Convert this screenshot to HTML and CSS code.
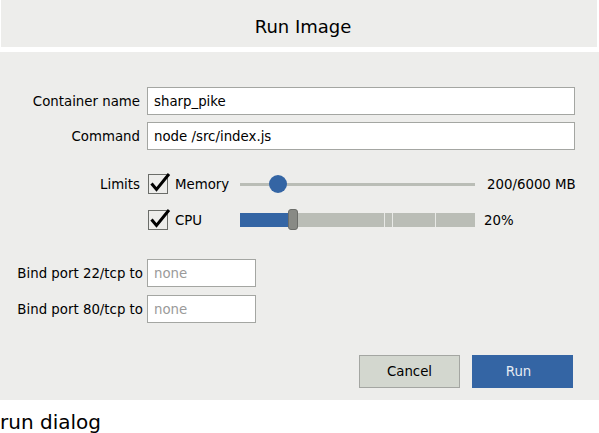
FILE: index.html
```html
<!DOCTYPE html>
<html>
<head>
<meta charset="utf-8">
<link rel="stylesheet" href="styles.css">
</head>
<body>
<div class="dialog">
  <div class="header"><span class="title">Run Image</span></div>
  <div class="content">
    <div class="row row-first">
      <label class="label">Container name</label>
      <div class="input wide">sharp_pike</div>
    </div>
    <div class="row row-second">
      <label class="label">Command</label>
      <div class="input wide">node /src/index.js</div>
    </div>
    <div class="row row-limit row-mem">
      <span class="label">Limits</span>
      <svg class="check" width="24" height="22" viewBox="0 0 24 22"><rect x="1.5" y="1.5" width="19" height="19" fill="none" stroke="#6b6d69" stroke-width="1"/><path d="M4.5 10.5 L9.5 16.5 L22 1" fill="none" stroke="#000" stroke-width="3" stroke-linejoin="miter"/></svg>
      <span class="limit-name">Memory</span>
      <div class="scale">
        <div class="scale-track"></div>
        <div class="scale-knob"></div>
      </div>
      <span class="limit-value">200/6000 MB</span>
    </div>
    <div class="row row-limit row-cpu">
      <span class="label"></span>
      <svg class="check" width="24" height="22" viewBox="0 0 24 22"><rect x="1.5" y="1.5" width="19" height="19" fill="none" stroke="#6b6d69" stroke-width="1"/><path d="M4.5 10.5 L9.5 16.5 L22 1" fill="none" stroke="#000" stroke-width="3" stroke-linejoin="miter"/></svg>
      <span class="limit-name">CPU</span>
      <div class="bar">
        <div class="bar-fill"></div>
        <div class="bar-rest">
          <span class="tick tick1"></span>
          <span class="tick tick2"></span>
          <span class="tick tick3"></span>
        </div>
        <div class="bar-handle"></div>
      </div>
      <span class="limit-value cpu-value">20%</span>
    </div>
    <div class="row row-port1">
      <label class="label port-label">Bind port 22/tcp to</label>
      <div class="input narrow placeholder">none</div>
    </div>
    <div class="row row-port2">
      <label class="label port-label">Bind port 80/tcp to</label>
      <div class="input narrow placeholder">none</div>
    </div>
    <div class="buttons">
      <button class="btn btn-cancel">Cancel</button>
      <button class="btn btn-run">Run</button>
    </div>
  </div>
</div>
<div class="caption">run dialog</div>
</body>
</html>
```
FILE: styles.css
```css
html, body {
  margin: 0;
  padding: 0;
  background: #ffffff;
}
body {
  font-family: "DejaVu Sans", "Liberation Sans", sans-serif;
  font-size: 13.33px;
  color: #000;
  width: 599px;
}
.header {
  margin: 0 2px 0 1px;
  height: 47px;
  background: #ededeb;
  display: flex;
  align-items: center;
  justify-content: center;
}
.title {
  font-size: 18px;
  padding-left: 8px;
  padding-top: 6px;
  color: #000;
}
.content {
  margin-top: 5px;
  background: #ededeb;
  height: 348px;
  padding-top: 35px;
  box-sizing: border-box;
  display: flex;
  flex-direction: column;
}
.row {
  display: flex;
  align-items: center;
}
.label {
  width: 140px;
  text-align: right;
  margin-right: 7px;
  flex: none;
  white-space: nowrap;
  color: #000;
}
.port-label {
  width: 143px;
  margin-right: 4px;
}
.input {
  box-sizing: border-box;
  height: 28px;
  background: #fff;
  border: 1px solid #a4a6a2;
  padding: 0 6px;
  display: flex;
  align-items: center;
  color: #000;
}
.wide { width: 428px; }
.narrow { width: 109px; }
.placeholder { color: #9a9a9a; }
.row-second { margin-top: 7px; }
.row-limit { height: 22px; }
.row-mem { margin-top: 23px; }
.row-cpu { margin-top: 14px; }
.check {
  flex: none;
  display: block;
}
.limit-name {
  width: 65px;
  margin-left: 4px;
  flex: none;
}
.scale {
  position: relative;
  width: 235px;
  height: 22px;
  flex: none;
}
.scale-track {
  position: absolute;
  left: 0;
  right: 0;
  top: 10px;
  height: 3px;
  background: #babdb6;
}
.scale-knob {
  position: absolute;
  left: 29px;
  top: 2px;
  width: 18px;
  height: 18px;
  border-radius: 50%;
  background: #3465a4;
}
.limit-value {
  margin-left: 12px;
  white-space: nowrap;
}
.cpu-value { margin-left: 9px; }
.bar {
  position: relative;
  width: 235px;
  height: 14px;
  display: flex;
  flex: none;
}
.bar-fill {
  width: 50px;
  background: #3465a4;
}
.bar-rest {
  flex: 1;
  background: #babdb6;
  position: relative;
}
.tick {
  position: absolute;
  top: 0;
  bottom: 0;
  width: 1px;
  background: #e8e9e6;
}
.tick1 { left: 94px; }
.tick2 { left: 102px; }
.tick3 { left: 145px; }
.bar-handle {
  position: absolute;
  left: 48px;
  top: -4px;
  width: 10px;
  height: 21px;
  box-sizing: border-box;
  background: #888a85;
  border: 1px solid #6b6d69;
  border-radius: 3px;
}
.row-port1 { margin-top: 28px; }
.row-port2 { margin-top: 8px; }
.buttons {
  display: flex;
  justify-content: flex-end;
  gap: 12px;
  margin-top: 32px;
  padding-right: 26px;
}
.btn {
  font-family: "DejaVu Sans", "Liberation Sans", sans-serif;
  font-size: 13.33px;
  width: 101px;
  height: 33px;
  box-sizing: border-box;
  margin: 0;
  padding: 0;
}
.btn-cancel {
  background: #d3d7cf;
  border: 1px solid #a4a6a2;
  color: #000;
}
.btn-run {
  background: #3465a4;
  border: 1px solid #3465a4;
  color: #e6ecf3;
  padding-right: 8px;
}
.caption {
  font-size: 20px;
  margin-top: 11px;
  line-height: 23px;
  color: #000;
}
```
